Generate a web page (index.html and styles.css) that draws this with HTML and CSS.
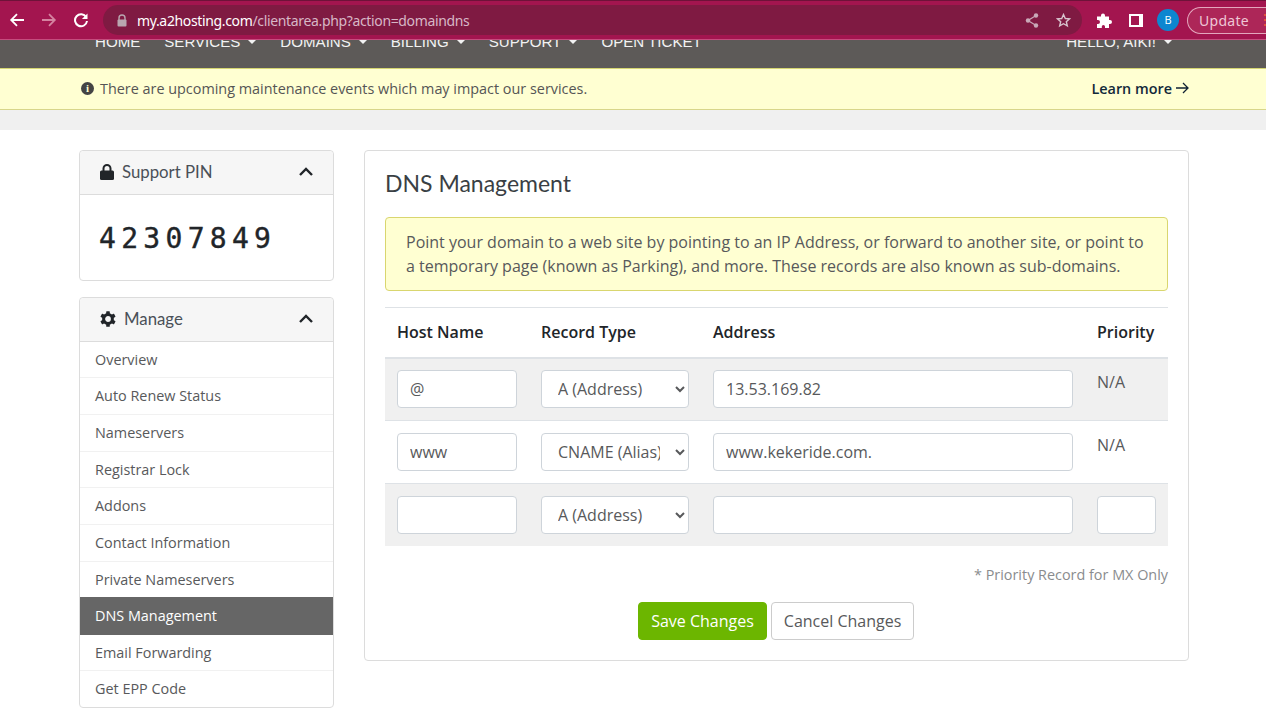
FILE: index.html
```html
<!DOCTYPE html>
<html>
  <head>
    <title>DNS Management</title>
    <meta name="viewport" content="width=device-width, initial-scale=1.0">
    <link rel="stylesheet" href="styles.css">
  </head>
  <body>
    <div class="browser-bar">
      <svg class="nav-icon" width="16" height="16" viewBox="0 0 16 16"><path d="M15 8H2.500M8 2.200L2.200 8 8 13.800" fill="none" stroke="#fff" stroke-width="1.800"/></svg>
      <svg class="nav-icon" width="16" height="16" viewBox="0 0 16 16"><path d="M1 8h12.500M8 2.200L13.800 8 8 13.800" fill="none" stroke="#d583a0" stroke-width="1.800"/></svg>
      <svg class="nav-icon" width="16" height="16" viewBox="0 0 16 16"><path d="M13.200 5.200A6 6 0 1 0 14 9" fill="none" stroke="#fff" stroke-width="2"/><path d="M14.500 1.500v5.600H8.900z" fill="#fff"/></svg>
      <div class="omnibox">
        <svg width="10" height="13" viewBox="0 0 10 13"><path d="M2 6V4a3 3 0 0 1 6 0v2" fill="none" stroke="#b9a6af" stroke-width="1.400"/><rect x="0.500" y="5.500" width="9" height="7" rx="1" fill="#b9a6af"/></svg>
        <span class="url"><b>my.a2hosting.com</b>/clientarea.php?action=domaindns</span>
        <svg class="share" width="14" height="15" viewBox="0 0 14 15"><path d="M11 2.500L3 7.500l8 5" fill="none" stroke="#c9a9b8" stroke-width="1.200"/><circle cx="11" cy="2.500" r="2.200" fill="#c9a9b8"/><circle cx="3" cy="7.500" r="2.200" fill="#c9a9b8"/><circle cx="11" cy="12.500" r="2.200" fill="#c9a9b8"/></svg>
        <svg width="15" height="15" viewBox="0 0 15 15"><path d="M7.500 1.500l1.800 4 4.200.4-3.200 2.800 1 4.200-3.800-2.200-3.800 2.200 1-4.200L1.500 5.900l4.200-.4z" fill="none" stroke="#d8c3cd" stroke-width="1.400"/></svg>
      </div>
      <svg class="puzzle" width="15" height="15" viewBox="0 0 15 15"><path d="M0 3.500h4V2.500a2 2 0 0 1 4 0v1h4v3.500h1a2 2 0 0 1 0 4h-1V15H8v-1.500a1.600 1.600 0 0 0-3.200 0V15H0v-4h1a2 2 0 0 0 0-4H0z" fill="#fff"/></svg>
      <span class="panel-icon"></span>
      <span class="avatar">B</span>
      <span class="update">Update<i class="menu-dots"></i></span>
    </div>

    <div class="top-nav">
      <div class="nav-links">
        <a>HOME</a>
        <a class="caret">SERVICES</a>
        <a class="caret">DOMAINS</a>
        <a class="caret">BILLING</a>
        <a class="caret">SUPPORT</a>
        <a>OPEN TICKET</a>
      </div>
      <a class="caret hello">HELLO, AIKI!</a>
    </div>

    <div class="notice">
      <span class="info-dot">i</span>
      <span class="notice-text">There are upcoming maintenance events which may impact our services.</span>
      <a class="learn-more">Learn more
        <svg width="13" height="12" viewBox="0 0 13 12"><path d="M0 6h12M7 1l5 5-5 5" fill="none" stroke="#123" stroke-width="1.300"/></svg>
      </a>
    </div>
    <div class="band"></div>

    <div class="page">
      <div class="sidebar">
        <div class="panel">
          <div class="panel-head">
            <svg width="14" height="16" viewBox="0 0 14 16"><path d="M3.500 7V4.500a3.500 3.500 0 0 1 7 0V7" fill="none" stroke="#212529" stroke-width="2"/><rect y="6.500" width="14" height="9.500" rx="1.500" fill="#212529"/></svg>
            <span class="panel-title">Support PIN</span>
            <svg width="16" height="10" viewBox="0 0 16 10"><path d="M2 8l6-6 6 6" fill="none" stroke="#212529" stroke-width="2.400"/></svg>
          </div>
          <div class="pin">42307849</div>
        </div>
        <div class="panel">
          <div class="panel-head">
            <svg width="16" height="16" viewBox="0 0 16 16">
              <circle cx="8" cy="8" r="4.400" fill="none" stroke="#212529" stroke-width="3"/>
              <rect x="6.200" y="0.200" width="3.600" height="3.600" rx="0.600" fill="#212529"/>
              <rect x="6.200" y="0.200" width="3.600" height="3.600" rx="0.600" fill="#212529" transform="rotate(60 8 8)"/>
              <rect x="6.200" y="0.200" width="3.600" height="3.600" rx="0.600" fill="#212529" transform="rotate(120 8 8)"/>
              <rect x="6.200" y="0.200" width="3.600" height="3.600" rx="0.600" fill="#212529" transform="rotate(180 8 8)"/>
              <rect x="6.200" y="0.200" width="3.600" height="3.600" rx="0.600" fill="#212529" transform="rotate(240 8 8)"/>
              <rect x="6.200" y="0.200" width="3.600" height="3.600" rx="0.600" fill="#212529" transform="rotate(300 8 8)"/>
            </svg>
            <span class="panel-title">Manage</span>
            <svg width="16" height="10" viewBox="0 0 16 10"><path d="M2 8l6-6 6 6" fill="none" stroke="#212529" stroke-width="2.400"/></svg>
          </div>
          <div class="side-links">
            <a class="side-link">Overview</a>
            <a class="side-link">Auto Renew Status</a>
            <a class="side-link">Nameservers</a>
            <a class="side-link">Registrar Lock</a>
            <a class="side-link">Addons</a>
            <a class="side-link">Contact Information</a>
            <a class="side-link">Private Nameservers</a>
            <a class="side-link active">DNS Management</a>
            <a class="side-link">Email Forwarding</a>
            <a class="side-link">Get EPP Code</a>
          </div>
        </div>
      </div>

      <div class="card">
        <h3>DNS Management</h3>
        <div class="info-box">Point your domain to a web site by pointing to an IP Address, or forward to another site, or point to a temporary page (known as Parking), and more. These records are also known as sub-domains.</div>
        <table class="records">
          <thead>
            <tr>
              <th class="col-host">Host Name</th>
              <th class="col-type">Record Type</th>
              <th class="col-addr">Address</th>
              <th class="col-prio">Priority</th>
            </tr>
          </thead>
          <tbody>
            <tr class="odd">
              <td><input class="field" type="text" value="@"></td>
              <td><select class="field"><option>A (Address)</option></select></td>
              <td><input class="field" type="text" value="13.53.169.82"></td>
              <td class="na">N/A</td>
            </tr>
            <tr>
              <td><input class="field" type="text" value="www"></td>
              <td><select class="field"><option>CNAME (Alias)</option></select></td>
              <td><input class="field" type="text" value="www.kekeride.com."></td>
              <td class="na">N/A</td>
            </tr>
            <tr class="odd">
              <td><input class="field" type="text"></td>
              <td><select class="field"><option>A (Address)</option></select></td>
              <td><input class="field" type="text"></td>
              <td><input class="field" type="text"></td>
            </tr>
          </tbody>
        </table>
        <p class="footnote">* Priority Record for MX Only</p>
        <div class="actions">
          <button class="btn btn-save">Save Changes</button>
          <button class="btn btn-cancel">Cancel Changes</button>
        </div>
      </div>
    </div>
  </body>
</html>
```

FILE: styles.css
```css
* {
  box-sizing: border-box;
}

html, body {
  height: 708px;
  overflow: hidden;
}

body {
  margin: 0;
  background-color: #fff;
  font-family: "Open Sans", Arial, sans-serif;
  font-size: 14.400px;
  color: #58595b;
}

.browser-bar {
  height: 40px;
  background-color: #a3154f;
  border-top: 1px solid #6e1239;
  border-bottom: 1px solid #c54d7e;
  display: flex;
  align-items: center;
  padding-left: 9px;
}

.nav-icon {
  margin-right: 16px;
  flex-shrink: 0;
}

.omnibox {
  width: 979px;
  height: 30px;
  margin-left: -2px;
  flex-shrink: 0;
  border-radius: 15px;
  background-color: #7f1a42;
  display: flex;
  align-items: center;
  padding: 0 11px 0 14px;
}

.url {
  margin-left: 10px;
  flex-grow: 1;
  font-family: "Noto Sans", Arial, sans-serif;
  font-size: 14px;
  color: #d7b7c6;
  letter-spacing: -0.350px;
}

.url b {
  font-weight: 400;
  color: #fff;
}

.share {
  margin-right: 17px;
}

.puzzle {
  margin-left: 15px;
  flex-shrink: 0;
}

.panel-icon {
  width: 14px;
  height: 13px;
  margin-left: 17px;
  border: 2px solid #fff;
  border-right-width: 4px;
  flex-shrink: 0;
}

.avatar {
  width: 22px;
  height: 22px;
  margin-left: 14px;
  border-radius: 50%;
  background-color: #0d86d0;
  color: #fff;
  font-size: 11px;
  line-height: 22px;
  text-align: center;
  flex-shrink: 0;
}

.update {
  width: 79px;
  height: 27px;
  margin-left: 8px;
  flex-shrink: 0;
  display: flex;
  align-items: center;
  border: 1px solid #e3a6bd;
  border-right: none;
  border-radius: 14px 0 0 14px;
  background-color: #ad2658;
  color: #eec7d5;
  font-family: "Noto Sans", Arial, sans-serif;
  font-size: 14px;
  letter-spacing: 0.300px;
  padding-left: 11px;
}

.menu-dots {
  width: 2px;
  height: 12px;
  margin-left: auto;
  background: repeating-linear-gradient(#e0503c 0 2px, transparent 2px 5px);
}

.top-nav {
  height: 28px;
  background-color: #5d5a58;
  display: flex;
  justify-content: space-between;
  overflow: hidden;
  padding: 0 94px 0 95px;
  font-family: "Liberation Sans", Arial, sans-serif;
  font-size: 15.100px;
  line-height: 20px;
  color: #f2f2f2;
}

.nav-links {
  display: flex;
  gap: 24px;
  margin-top: -8px;
}

.hello {
  margin-top: -8px;
}

.caret::after {
  content: "";
  display: inline-block;
  margin-left: 8px;
  vertical-align: 3px;
  border-top: 4px solid #f2f2f2;
  border-left: 4px solid transparent;
  border-right: 4px solid transparent;
}

.notice {
  height: 42px;
  background-color: #ffffd2;
  border-top: 1px solid #d5d571;
  border-bottom: 1px solid #d8d68a;
  display: flex;
  align-items: center;
  padding: 0 77px 2px 81px;
}

.info-dot {
  width: 13px;
  height: 13px;
  border-radius: 50%;
  background-color: #444;
  color: #ffffd2;
  font-family: "Liberation Serif", serif;
  font-size: 11px;
  font-weight: 700;
  line-height: 13px;
  text-align: center;
}

.notice-text {
  margin-left: 6px;
  flex-grow: 1;
  color: #555;
}

.learn-more {
  font-weight: 600;
  color: #12293a;
  display: flex;
  align-items: center;
  gap: 4px;
}

.band {
  height: 20px;
  background-color: #f0f0f0;
}

.page {
  display: flex;
  align-items: flex-start;
  gap: 30px;
  padding: 20px 77px 0 79px;
}

.sidebar {
  width: 255px;
  flex-shrink: 0;
}

.panel {
  background-color: #fff;
  border: 1px solid #dcdcdc;
  border-radius: 4px;
  margin-bottom: 16px;
}

.panel-head {
  height: 44px;
  background-color: #f6f6f6;
  border-bottom: 1px solid #dcdcdc;
  border-radius: 4px 4px 0 0;
  display: flex;
  align-items: center;
  padding: 0 19px 2px 20px;
  font-family: "Lato", Arial, sans-serif;
  font-size: 16.800px;
  color: #4a5058;
}

.panel-title {
  margin-left: 8px;
  flex-grow: 1;
}

.pin {
  height: 85px;
  padding: 26px 0 0 19px;
  font-family: "DejaVu Sans Mono", monospace;
  font-size: 28px;
  line-height: 36px;
  letter-spacing: 5.300px;
  color: #212529;
  -webkit-text-stroke: 0.400px #212529;
}

.side-links {
  margin-top: -0.300px;
}

.side-link {
  display: block;
  height: 36.650px;
  padding-left: 15px;
  line-height: 35px;
  border-bottom: 1px solid #f1f1f1;
  color: #58595b;
}

.side-link:last-child {
  height: 35.600px;
  border-bottom: none;
}

.side-link.active {
  height: 37.500px;
  margin-top: -1px;
  line-height: 38px;
  border-bottom: none;
  background-color: #666;
  color: #fff;
}

.card {
  width: 825px;
  height: 511px;
  border: 1px solid #dcdcdc;
  border-radius: 4px;
  padding: 19px 20px 0;
}

.card h3 {
  margin: 0 0 21px;
  font-family: "Lato", Arial, sans-serif;
  font-size: 23px;
  font-weight: 400;
  line-height: 26px;
  color: #3a3f44;
}

.info-box {
  height: 74px;
  padding: 12px 20px;
  background-color: #ffffd2;
  border: 1px solid #d9d66f;
  border-radius: 4px;
  font-size: 16px;
  line-height: 24px;
  color: #58595b;
}

.records {
  width: 783px;
  margin-top: 16px;
  border-collapse: collapse;
  table-layout: fixed;
}

.records th {
  height: 50px;
  padding: 0 12px;
  border-top: 1px solid #dee2e6;
  border-bottom: 2px solid #dee2e6;
  text-align: left;
  font-size: 16px;
  font-weight: 600;
  color: #212529;
}

.col-host {
  width: 144px;
}

.col-type {
  width: 172px;
}

.col-addr {
  width: 384px;
}

.records td {
  height: 63px;
  padding: 0 12px;
  border-bottom: 1px solid #dee2e6;
  vertical-align: middle;
}

.records tr:last-child td {
  border-bottom: none;
  height: 62px;
}

.odd td {
  background-color: #f0f0f0;
}

.field {
  display: block;
  width: 100%;
  height: 38px;
  padding: 0 12px;
  background-color: #fff;
  border: 1px solid #ced4da;
  border-radius: 4px;
  font-family: "Open Sans", Arial, sans-serif;
  font-size: 16px;
  color: #58595b;
}

.records td.na {
  vertical-align: top;
  padding-top: 12.500px;
  font-size: 16px;
  color: #58595b;
}

.footnote {
  margin: 19px 0 0;
  text-align: right;
  color: #8a8c8e;
}

.actions {
  display: flex;
  justify-content: center;
  gap: 4px;
  margin-top: 18px;
  padding-right: 1px;
}

.btn {
  height: 38px;
  padding: 0 12px;
  border-radius: 4px;
  font-family: "Open Sans", Arial, sans-serif;
  font-size: 16px;
}

.btn-save {
  background-color: #6cb600;
  border: 1px solid #6cb600;
  color: #fff;
}

.btn-cancel {
  background-color: #fff;
  border: 1px solid #ccc;
  color: #58595b;
  padding-right: 11.500px;
}
```
